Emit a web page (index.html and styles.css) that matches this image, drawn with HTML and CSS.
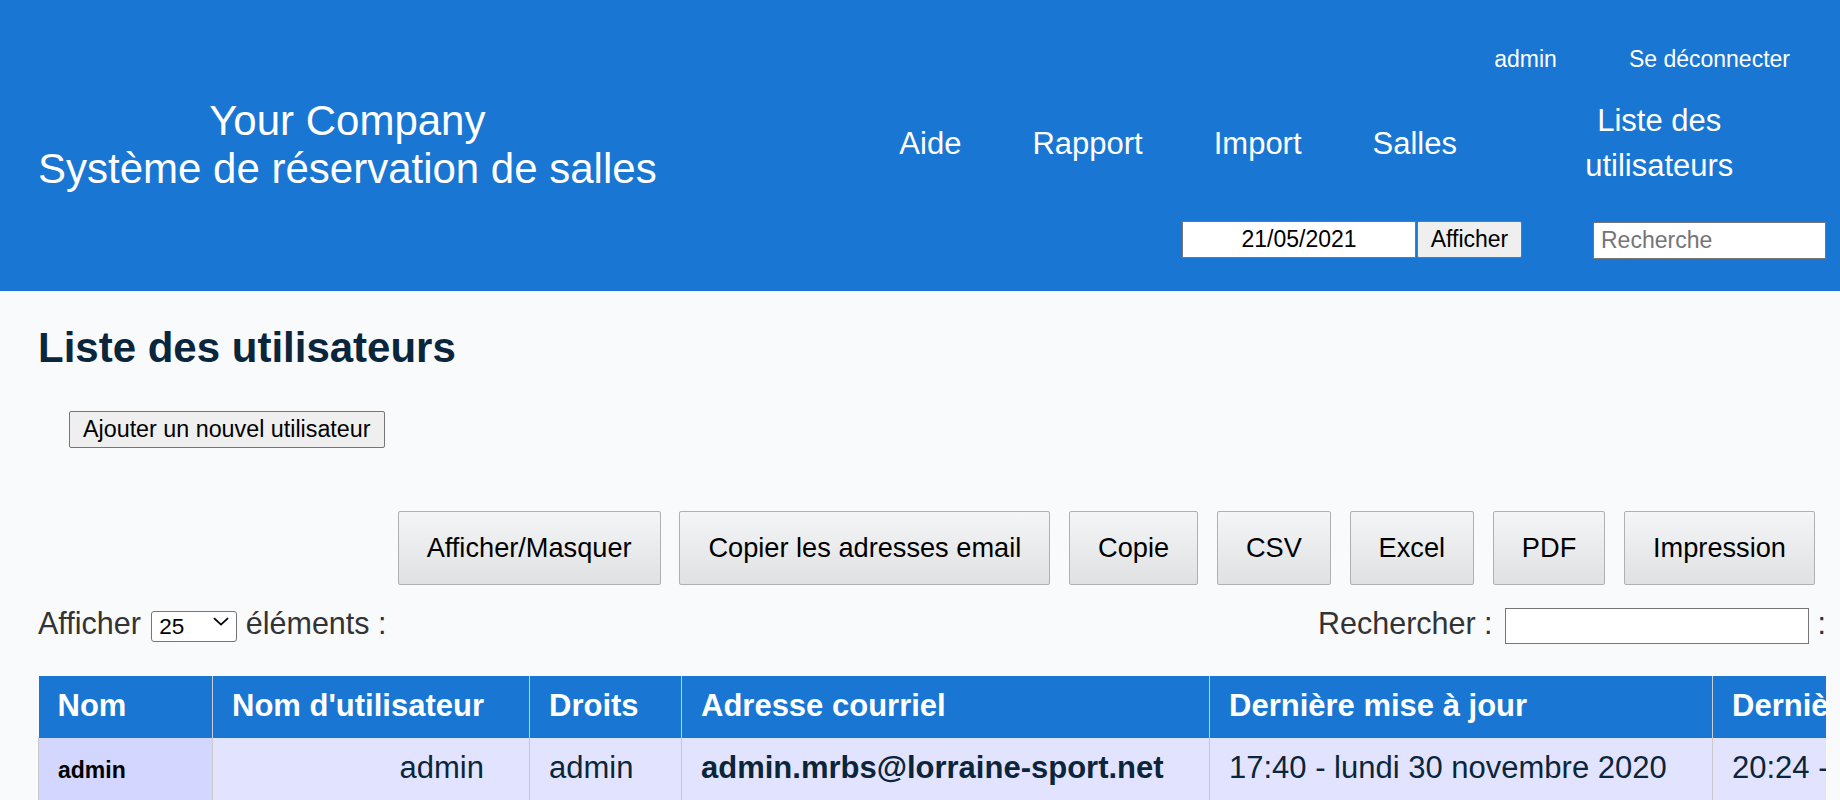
FILE: index.html
```html
<!DOCTYPE html>
<html lang="fr">
<head>
<meta charset="utf-8">
<title>Liste des utilisateurs</title>
<link rel="stylesheet" href="styles.css">
</head>
<body>
<header class="banner">
  <div class="company">
    <div>Your Company</div>
    <div>Système de réservation de salles</div>
  </div>
  <div class="banner-right">
    <div class="user-links">
      <a class="user-link">admin</a>
      <a class="user-link">Se déconnecter</a>
    </div>
    <nav class="nav">
      <a class="nav-item">Aide</a>
      <a class="nav-item">Rapport</a>
      <a class="nav-item">Import</a>
      <a class="nav-item">Salles</a>
      <a class="nav-item nav-item-wide">Liste des<br>utilisateurs</a>
    </nav>
    <div class="forms">
      <form class="date-form">
        <input class="date-input" type="text" value="21/05/2021">
        <button class="date-btn" type="button">Afficher</button>
      </form>
      <input class="search-input" type="text" placeholder="Recherche">
    </div>
  </div>
</header>
<main class="content">
  <h2 class="title">Liste des utilisateurs</h2>
  <button class="add-btn" type="button">Ajouter un nouvel utilisateur</button>
  <div class="dt-buttons">
    <button class="dt-button" type="button">Afficher/Masquer</button>
    <button class="dt-button" type="button">Copier les adresses email</button>
    <button class="dt-button" type="button">Copie</button>
    <button class="dt-button" type="button">CSV</button>
    <button class="dt-button" type="button">Excel</button>
    <button class="dt-button" type="button">PDF</button>
    <button class="dt-button" type="button">Impression</button>
  </div>
  <div class="dt-controls">
    <label class="dt-length">Afficher <span class="select-wrap"><select class="dt-select"><option>25</option><option>50</option><option>100</option></select><svg class="select-arrow" width="16" height="9" viewBox="0 0 16 9"><path d="M1 1.2 L8 7.6 L15 1.2" fill="none" stroke="#000" stroke-width="1.8"/></svg></span> éléments :</label>
    <label class="dt-filter">Rechercher : <input class="dt-search" type="text"> :</label>
  </div>
  <div class="table-wrap">
    <table class="users">
      <colgroup>
        <col class="c-nom">
        <col class="c-user">
        <col class="c-droits">
        <col class="c-mail">
        <col class="c-maj">
        <col class="c-cnx">
      </colgroup>
      <thead>
        <tr>
          <th>Nom</th>
          <th>Nom d'utilisateur</th>
          <th>Droits</th>
          <th>Adresse courriel</th>
          <th>Dernière mise à jour</th>
          <th>Dernière connexion</th>
        </tr>
      </thead>
      <tbody>
        <tr>
          <td class="sorted">admin</td>
          <td class="right">admin</td>
          <td>admin</td>
          <td class="email">admin.mrbs@lorraine-sport.net</td>
          <td>17:40 - lundi 30 novembre 2020</td>
          <td>20:24 - vendredi 21 mai 2021</td>
        </tr>
      </tbody>
    </table>
  </div>
</main>
</body>
</html>
```

FILE: styles.css
```css
* {
  box-sizing: border-box;
}

html,
body {
  margin: 0;
  padding: 0;
}

body {
  background: #f9fafc;
  font-family: "Liberation Sans", Arial, sans-serif;
  color: #0b263b;
  overflow: hidden;
}

/* ---------- banner ---------- */
.banner {
  display: flex;
  justify-content: space-between;
  height: 291px;
  padding: 0 14px 0 38px;
  background: #1976d2;
  color: #fff;
}

.company {
  align-self: center;
  padding-bottom: 2px;
  text-align: center;
  font-size: 42px;
  line-height: 48px;
}

.banner-right {
  display: flex;
  flex-direction: column;
  align-items: flex-end;
}

.user-links {
  display: flex;
  margin-top: 46px;
  font-size: 23px;
  line-height: 26px;
}

.user-link {
  padding: 0 36px;
}

.nav {
  display: flex;
  align-items: center;
  height: 90px;
  margin-top: 26px;
  font-size: 31px;
  line-height: 45px;
}

.nav-item {
  padding: 0 35.5px;
}

.nav-item-wide {
  width: 333.5px;
  text-align: center;
}

.forms {
  display: flex;
  align-items: flex-start;
  margin-top: 33px;
}

.date-form {
  display: flex;
  margin: 0;
}

.date-input {
  width: 234px;
  height: 37px;
  padding: 0;
  border: 1px solid #767676;
  background: #fff;
  color: #000;
  font-family: inherit;
  font-size: 23px;
  text-align: center;
}

.date-btn {
  width: 105px;
  height: 37px;
  margin-left: 1px;
  padding: 0;
  border: 1px solid #767676;
  border-radius: 2px;
  background: #efefef;
  color: #000;
  font-family: inherit;
  font-size: 23px;
}

.search-input {
  width: 233px;
  height: 37px;
  margin: 1px 0 0 71px;
  padding: 0 7px;
  border: 1px solid #767676;
  background: #fff;
  color: #000;
  font-family: inherit;
  font-size: 23px;
}

.search-input::placeholder {
  color: #757575;
}

/* ---------- content ---------- */
.content {
  padding: 0 14px 0 38px;
}

.title {
  margin: 33px 0 0;
  font-size: 42px;
  line-height: 48px;
  font-weight: bold;
  color: #0b263b;
}

.add-btn {
  display: block;
  height: 37px;
  margin: 39px 0 0 31px;
  padding: 0 13px;
  border: 1px solid #767676;
  border-radius: 2px;
  background: #efefef;
  color: #000;
  font-family: inherit;
  font-size: 23.3px;
}

.dt-buttons {
  display: flex;
  justify-content: flex-end;
  gap: 18.8px;
  margin-top: 63px;
  padding-right: 11px;
}

.dt-button {
  padding: 14px 28px;
  border: 1px solid #aeb0b3;
  border-radius: 2px;
  background: linear-gradient(to bottom, #f4f5f6 0%, #e0e1e3 100%);
  color: #000;
  font-family: inherit;
  font-size: 27.2px;
  line-height: 43.5px;
}

.dt-controls {
  display: flex;
  justify-content: space-between;
  align-items: baseline;
  margin-top: 21px;
  font-size: 30.5px;
  color: #333;
}

.select-wrap {
  position: relative;
  display: inline-block;
  margin-left: 2px;
}

.dt-select {
  -webkit-appearance: none;
  appearance: none;
  width: 86px;
  height: 31px;
  padding: 0 0 0 7px;
  border: 1px solid #767676;
  border-radius: 3px;
  background: #fff;
  color: #000;
  font-family: inherit;
  font-size: 22.5px;
}

.select-arrow {
  position: absolute;
  right: 8px;
  top: 11px;
  pointer-events: none;
}

.dt-search {
  width: 304px;
  height: 36px;
  margin-left: 4px;
  padding: 0 4px;
  border: 1px solid #767676;
  background: #fff;
  font-family: inherit;
  font-size: 23px;
}

/* ---------- table ---------- */
.table-wrap {
  margin-top: 32px;
  overflow: hidden;
}

.users {
  width: 2194px;
  border-collapse: collapse;
  table-layout: fixed;
  font-size: 31px;
}

.c-nom { width: 174px; }
.c-user { width: 317px; }
.c-droits { width: 152px; }
.c-mail { width: 528px; }
.c-maj { width: 503px; }
.c-cnx { width: 520px; }

.users th {
  padding: 12px 19px 14px;
  border-left: 1px solid #c9ced6;
  background: #1976d2;
  color: #fff;
  font-weight: bold;
  line-height: 36px;
  text-align: left;
  white-space: nowrap;
}

.users th:first-child {
  border-left: none;
}

.users td {
  padding: 12px 19px 14px;
  border-left: 1px solid #c8c8c8;
  background: #e2e4ff;
  color: #0b263b;
  line-height: 36px;
  white-space: nowrap;
  vertical-align: baseline;
}

.users td.sorted {
  background: #d3d6ff;
  color: #000;
  font-size: 23px;
  font-weight: bold;
}

.users td.right {
  padding-right: 45px;
  text-align: right;
}

.users td.email {
  font-weight: bold;
}
```
